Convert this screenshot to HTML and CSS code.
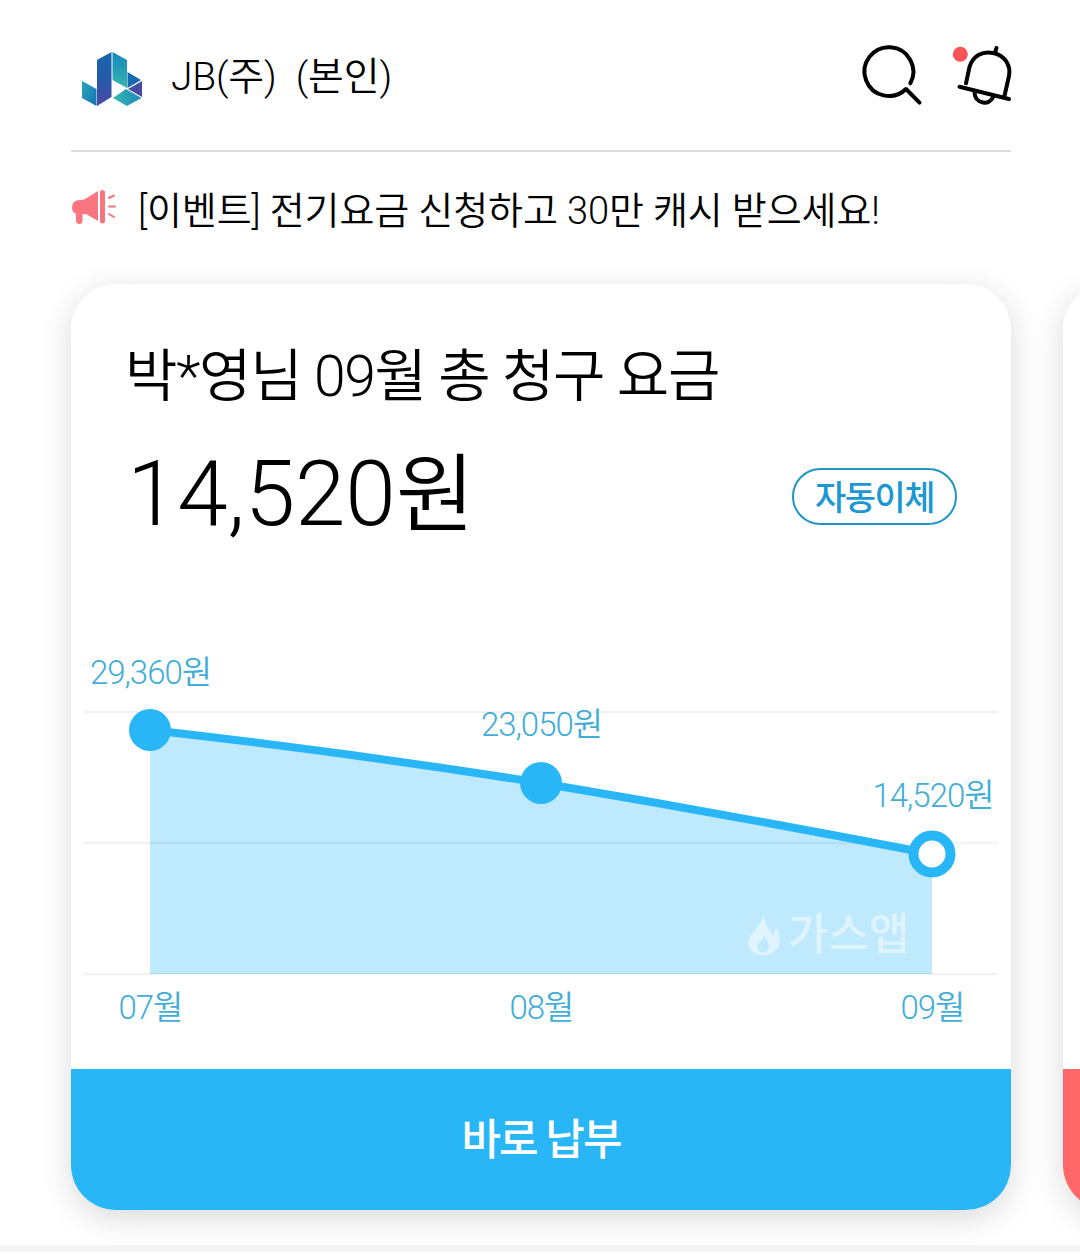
FILE: index.html
```
<!DOCTYPE html>
<html lang="ko">
<head>
    <meta charset="UTF-8">
    <meta name="viewport" content="width=device-width, initial-scale=1.0">
    <title>가스앱</title>
    <link rel="stylesheet" href="styles.css">
</head>
<body>
    <div class="home">
        <header class="header">
            <svg class="logo" viewBox="0 0 62 56">
                <defs>
                    <linearGradient id="gLeft" x1="0" y1="0" x2="1" y2="1">
                        <stop offset="0" stop-color="#27a9b9"/>
                        <stop offset="1" stop-color="#1470b5"/>
                    </linearGradient>
                    <linearGradient id="gMain" x1="0" y1="0" x2="0" y2="1">
                        <stop offset="0" stop-color="#1268ad"/>
                        <stop offset="0.5" stop-color="#2659a8"/>
                        <stop offset="1" stop-color="#4b48a3"/>
                    </linearGradient>
                    <linearGradient id="gTeal" x1="0" y1="0" x2="0" y2="1">
                        <stop offset="0" stop-color="#1687bd"/>
                        <stop offset="1" stop-color="#35b5ae"/>
                    </linearGradient>
                    <linearGradient id="gFoot" x1="0" y1="0" x2="1" y2="0">
                        <stop offset="0" stop-color="#36b9ad"/>
                        <stop offset="1" stop-color="#1b89bb"/>
                    </linearGradient>
                </defs>
                <path d="M1 30 15.500 38V55L1 47Z" fill="url(#gLeft)"/>
                <path d="M16 9 30.500 1V46L16 55Z" fill="url(#gMain)"/>
                <path d="M31.500 1 46 9V37L31.500 29Z" fill="url(#gTeal)"/>
                <path d="M46.500 21 60 29 46.500 37Z" fill="#1769b0"/>
                <path d="M61 30V46L47 38Z" fill="#474ba4"/>
                <path d="M45 38 60.500 47 46 55 32 47Z" fill="url(#gFoot)"/>
            </svg>
            <h1 class="company">JB(주) <span class="owner">(본인)</span></h1>
            <div class="header-icons">
                <svg class="icon-search" viewBox="0 0 60 60">
                    <path d="M51.300 38.300A24.400 24.400 0 1 0 47 44L60.500 57.700"/>
                </svg>
                <svg class="icon-bell" viewBox="0 0 62 60">
                    <circle class="dot" cx="11.300" cy="9.300" r="7.500"/>
                    <path d="M17 38.300 20.500 22C24 10 34 6 44 8C56 10.500 62 20 60 31L55.300 51.700M46 7.500 47.500 3M10.500 41.700 60 54M25.500 46.500C25.500 60 41.500 61 44.500 51"/>
                </svg>
            </div>
        </header>

        <div class="notice">
            <svg class="icon-horn" viewBox="0 0 46 36">
                <path d="M26 2V32L14 25H10.500V32Q10.500 35 7.500 35T4 32V25Q0 23 0 18.500Q0 11 8 11Q11 11 13 10Z"/>
                <rect x="28" y="1" width="5" height="33.500" rx="2.500"/>
                <path class="rays" d="M37 9 42 6.500M37 17.500H43M37 25 42 28"/>
            </svg>
            <p>[이벤트] 전기요금 신청하고 30만 캐시 받으세요!</p>
        </div>

        <div class="cards">
            <section class="card">
                <h2 class="card-title">박*영님 09월 총 청구 요금</h2>
                <div class="amount-row">
                    <strong class="amount">14,520<span class="won">원</span></strong>
                    <span class="badge">자동이체</span>
                </div>
                <!-- monthly bill chart -->
                <svg class="chart" viewBox="0 0 940 409">
                    <path class="area" d="M79 70Q275 90 470 123Q666 152 861 194V314H79Z"/>
                    <path class="grid" d="M13 52H927M13 183H927M13 314H927"/>
                    <g class="watermark">
                        <path d="M692 254C694 267 701 270 701 275Q705 272 705 267C710 275 711 286 704 291C695 298 684 296 679 289C671 275 692 269 692 254ZM693 275C694 280 686 281 686 287C687 294 697 294 698 287C698 281 695 280 693 275Z"/>
                        <text x="717" y="290">가스앱</text>
                    </g>
                    <path class="line" d="M79 70Q275 92 470 123Q666 156 861 194"/>
                    <circle class="point" cx="79" cy="70" r="21"/>
                    <circle class="point" cx="470" cy="123" r="21"/>
                    <circle class="point-last" cx="861" cy="194" r="18.500"/>
                    <text class="value" x="79.500" y="24">29,360원</text>
                    <text class="value" x="470.500" y="76">23,050원</text>
                    <text class="value" x="862" y="147">14,520원</text>
                    <text class="month" x="79.500" y="359">07월</text>
                    <text class="month" x="470.500" y="359">08월</text>
                    <text class="month" x="861.500" y="359">09월</text>
                </svg>
                <button class="btn-pay">바로 납부</button>
            </section>
            <section class="card card-next">
                <button class="btn-pay"></button>
            </section>
        </div>
        <div class="divider"></div>
    </div>
</body>
</html>
```
FILE: styles.css
```
* {
    box-sizing: border-box;
}
body {
    margin: 0;
    background-color: #fff;
    color: #000;
    font-family: Roboto, "Noto Sans CJK KR", sans-serif;
    font-weight: 350;
}
h1, h2, p {
    margin: 0;
    font-weight: 350;
    white-space: nowrap;
}
.home {
    width: 1080px;
    height: 1256px;
    overflow: hidden;
}
.header {
    display: flex;
    align-items: center;
    width: 940px;
    height: 152px;
    margin-left: 71px;
    border-bottom: 2px solid #dcdcdc;
}
.logo {
    width: 62px;
    height: 56px;
    margin: 7px 28px 0 10px;
}
.company {
    padding-top: 4px;
    font-size: 39px;
    line-height: 60px;
    letter-spacing: -0.2px;
}
.owner {
    margin-left: 10px;
}
.header-icons {
    display: flex;
    gap: 30px;
    margin-left: auto;
}
.header-icons svg {
    height: 60px;
    fill: none;
    stroke: #000;
    stroke-width: 4;
    stroke-linecap: round;
    stroke-linejoin: round;
    overflow: visible;
}
.icon-search {
    width: 60px;
}
.icon-bell {
    width: 62px;
}
.header-icons .dot {
    fill: #fc5356;
    stroke: none;
}
.notice {
    display: flex;
    align-items: center;
    gap: 20px;
    height: 132px;
    margin-left: 72px;
    padding-bottom: 22px;
    font-size: 38px;
    letter-spacing: -0.1px;
}
.icon-horn {
    width: 46px;
    height: 36px;
    fill: #f9757f;
}
.icon-horn .rays {
    fill: none;
    stroke: #f9757f;
    stroke-width: 2;
    stroke-linecap: round;
}
.cards {
    display: flex;
    gap: 52px;
    margin-left: 71px;
}
.card {
    display: flex;
    flex-direction: column;
    flex: none;
    width: 940px;
    height: 926px;
    border-radius: 45px;
    background-color: #fff;
    box-shadow: 0 8px 32px rgba(0, 0, 0, 0.15);
}
.card-title {
    margin: 57px 0 0 54px;
    font-size: 57px;
    line-height: 72px;
    letter-spacing: -1.3px;
}
.amount-row {
    display: flex;
    align-items: center;
    justify-content: space-between;
    height: 130px;
    margin: 18px 54px 0 56px;
}
.amount {
    padding-bottom: 2px;
    font-size: 91px;
    font-weight: 350;
    line-height: 130px;
    letter-spacing: -0.2px;
}
.won {
    font-size: 86px;
}
.badge {
    width: 165px;
    height: 57px;
    border: 2px solid #2196c4;
    border-radius: 29px;
    color: #1b98d4;
    font-size: 34px;
    font-weight: 500;
    line-height: 56px;
    letter-spacing: -1.5px;
    text-align: center;
}
.chart {
    width: 940px;
    height: 409px;
    margin-top: 99px;
    overflow: visible;
}
.grid {
    stroke: #000;
    stroke-opacity: 0.05;
    stroke-width: 2.5;
}
.area {
    fill: #bfe9fd;
}
.line {
    fill: none;
    stroke: #29b6f6;
    stroke-width: 8;
}
.point {
    fill: #29b6f6;
}
.point-last {
    fill: #fff;
    stroke: #29b6f6;
    stroke-width: 10;
}
.value, .month {
    fill: #42add9;
    font-size: 33px;
    text-anchor: middle;
    letter-spacing: -1px;
}
.watermark {
    fill: #dff4fe;
    fill-rule: evenodd;
    font-size: 44px;
    font-weight: 500;
}
.btn-pay {
    height: 141px;
    margin-top: auto;
    padding: 0 0 7px;
    border: none;
    border-radius: 0 0 45px 45px;
    background-color: #29b6f6;
    color: #fff;
    font-family: inherit;
    font-size: 43px;
    font-weight: 500;
    letter-spacing: -2px;
}
.card-next .btn-pay {
    background-color: #ff6768;
}
.divider {
    height: 7px;
    margin-top: 35px;
    background-color: #f4f4f4;
}
```
